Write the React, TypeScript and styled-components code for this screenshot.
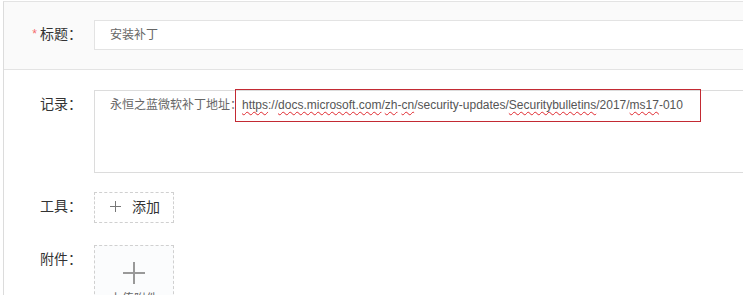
import React from "react";
import styled, { createGlobalStyle } from "styled-components";

const Global = createGlobalStyle`
  html, body { margin: 0; padding: 0; background: #fff; overflow: hidden; }
  body { font-family: "Noto Sans CJK SC", "Noto Sans", sans-serif; }
`;

const Frame = styled.div`
  margin: 1px 0 0 3px;
  width: 1100px;
  height: 400px;
  border-left: 1px solid #dcdcdc;
  border-top: 1px solid #e3e3e3;
`;

const HeaderSection = styled.section`
  background: #fafafa;
  border-bottom: 1px solid #e3e3e3;
  padding: 18px 0;
`;

const BodySection = styled.section`
  padding-top: 20px;
`;

const Row = styled.div<{ $mb?: number }>`
  display: flex;
  align-items: flex-start;
  margin-bottom: ${(p) => p.$mb ?? 0}px;
`;

const Label = styled.label`
  box-sizing: border-box;
  width: 90px;
  flex: none;
  padding-right: 12px;
  padding-bottom: 4px;
  text-align: right;
  font-size: 14px;
  line-height: 26px;
  color: #333;
  white-space: nowrap;
`;

const Star = styled.span`
  color: #f56c6c;
  font-size: 12px;
  margin-right: 3px;
  font-family: "Liberation Sans", sans-serif;
  vertical-align: 1px;
`;

const TextInput = styled.div`
  box-sizing: border-box;
  width: 800px;
  height: 30px;
  border: 1px solid #e3e3e3;
  background: #fff;
  padding: 0 15px 2px;
  font-size: 12px;
  line-height: 26px;
  color: #666;
`;

const TextArea = styled.div`
  position: relative;
  box-sizing: border-box;
  width: 800px;
  height: 83px;
  border: 1px solid #dcdcdc;
  padding: 3px 15px;
  font-size: 12px;
  line-height: 20px;
  color: #666;
  white-space: nowrap;
`;

const Url = styled.span`
  font-family: "Liberation Sans", Arial, sans-serif;
  font-size: 12px;
  color: #555;
  margin-left: 0;
`;

const Misspelled = styled.span`
  text-decoration: underline wavy #e0282e;
  text-decoration-thickness: 1px;
  text-underline-offset: 2px;
`;

const Annotation = styled.div`
  position: absolute;
  left: 140px;
  top: -2px;
  width: 466px;
  height: 33px;
  box-sizing: border-box;
  border: 1px solid #c32a33;
  pointer-events: none;
`;

const AddButton = styled.button`
  box-sizing: border-box;
  width: 80px;
  height: 31px;
  border: 1px dashed #d0d0d0;
  background: #fff;
  display: flex;
  align-items: center;
  gap: 11px;
  padding: 0 0 3px 15px;
  font-family: "Noto Sans CJK SC", sans-serif;
  font-size: 14px;
  color: #333;
  cursor: pointer;
`;

const Upload = styled.div`
  box-sizing: border-box;
  width: 80px;
  height: 80px;
  border: 1px dashed #d0d0d0;
  background: #fbfcfd;
  display: flex;
  flex-direction: column;
  align-items: center;
  padding-top: 16px;
  gap: 5px;
  font-size: 12px;
  color: #666;
`;

const PlusIcon = ({ size, stroke, color }: { size: number; stroke: number; color: string }) => (
  <svg width={size} height={size} viewBox={`0 0 ${size} ${size}`}>
    <line x1={0} y1={size / 2} x2={size} y2={size / 2} stroke={color} strokeWidth={stroke} />
    <line x1={size / 2} y1={0} x2={size / 2} y2={size} stroke={color} strokeWidth={stroke} />
  </svg>
);

export default function App() {
  return (
    <>
      <Global />
      <Frame>
        <HeaderSection>
          <Row>
            <Label>
              <Star>*</Star>标题：
            </Label>
            <TextInput>安装补丁</TextInput>
          </Row>
        </HeaderSection>
        <BodySection>
          <Row $mb={19}>
            <Label>记录：</Label>
            <TextArea>
              永恒之蓝微软补丁地址：
              <Url>
                <Misspelled>https</Misspelled>://<Misspelled>docs.microsoft.com</Misspelled>/
                <Misspelled>zh</Misspelled>-<Misspelled>cn</Misspelled>/security-updates/
                <Misspelled>Securitybulletins</Misspelled>/2017/<Misspelled>ms17</Misspelled>-010
              </Url>
              <Annotation />
            </TextArea>
          </Row>
          <Row $mb={22}>
            <Label>工具：</Label>
            <AddButton>
              <PlusIcon size={11} stroke={1} color="#777" />
              添加
            </AddButton>
          </Row>
          <Row>
            <Label>附件：</Label>
            <Upload>
              <PlusIcon size={22} stroke={2} color="#999" />
              上传附件
            </Upload>
          </Row>
        </BodySection>
      </Frame>
    </>
  );
}
